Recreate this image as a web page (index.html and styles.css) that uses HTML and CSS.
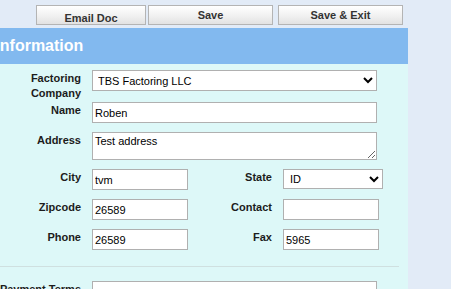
FILE: index.html
```html
<!DOCTYPE html>
<html lang="en">
<head>
    <meta charset="UTF-8">
    <meta name="viewport" content="width=device-width, initial-scale=1.0">
    <title>Factoring Company</title>
    <link rel="stylesheet" href="styles.css">
</head>
<body>
    <div class="toolbar">
        <button class="btn btn-email">Email Doc</button>
        <button class="btn btn-save">Save</button>
        <button class="btn btn-exit">Save &amp; Exit</button>
    </div>

    <div class="panel">
        <div class="panel-header">Company Information</div>
        <div class="panel-body">
            <div class="row">
                <div class="field">
                    <label class="label label-tall">Factoring Company</label>
                    <select class="input select-wide">
                        <option>TBS Factoring LLC</option>
                    </select>
                </div>
            </div>
            <div class="row">
                <div class="field">
                    <label class="label">Name</label>
                    <input class="input input-wide" type="text" value="Roben">
                </div>
            </div>
            <div class="row">
                <div class="field">
                    <label class="label">Address</label>
                    <textarea class="input textarea">Test address</textarea>
                </div>
            </div>
            <div class="row">
                <div class="field">
                    <label class="label">City</label>
                    <input class="input input-short" type="text" value="tvm">
                </div>
                <div class="field">
                    <label class="label">State</label>
                    <select class="input select-state">
                        <option>ID</option>
                    </select>
                </div>
            </div>
            <div class="row">
                <div class="field">
                    <label class="label">Zipcode</label>
                    <input class="input input-short" type="text" value="26589">
                </div>
                <div class="field">
                    <label class="label">Contact</label>
                    <input class="input input-short" type="text" value="">
                </div>
            </div>
            <div class="row">
                <div class="field">
                    <label class="label">Phone</label>
                    <input class="input input-short" type="text" value="26589">
                </div>
                <div class="field">
                    <label class="label">Fax</label>
                    <input class="input input-short" type="text" value="5965">
                </div>
            </div>

            <div class="divider"></div>

            <div class="row">
                <div class="field">
                    <label class="label">Payment Terms</label>
                    <input class="input input-wide" type="text" value="">
                </div>
            </div>
        </div>
    </div>
</body>
</html>
```

FILE: styles.css
```css
* {
    box-sizing: border-box;
}

body {
    margin: 0;
    background: #e2ebf7;
    font-family: 'Liberation Sans', Arial, sans-serif;
    height: 289px;
    overflow: hidden;
}

/* Top buttons */
.toolbar {
    display: flex;
    height: 28px;
    padding: 5px 0 0 36px;
}

.btn {
    height: 20px;
    padding: 0;
    border: 1px solid #b4b4b4;
    border-radius: 0;
    background: linear-gradient(#ffffff, #f2f2f2 50%, #e2e2e2);
    font-family: 'Liberation Sans', Arial, sans-serif;
    font-size: 11px;
    font-weight: bold;
    color: #333;
    line-height: 16px;
}

.btn-email {
    width: 110px;
    padding-top: 4px;
}

.btn-save {
    width: 125px;
    margin-left: 2px;
}

.btn-exit {
    width: 125px;
    margin-left: 5px;
}

/* Panel */
.panel {
    margin-left: -90px;
    width: 498px;
}

.panel-header {
    height: 36px;
    line-height: 36px;
    padding-left: 8px;
    background: #82b9ef;
    color: #fff;
    font-size: 16px;
    font-weight: bold;
    white-space: nowrap;
}

.panel-body {
    background: #ddf8f8;
    padding: 6px 9px 20px 87px;
}

.row {
    display: flex;
    margin-bottom: 9px;
}

.field {
    display: flex;
    align-items: flex-start;
}

.label {
    width: 84px;
    margin-right: 11px;
    padding-top: 1px;
    text-align: right;
    font-size: 11px;
    font-weight: bold;
    line-height: 15px;
    color: #1c1c1c;
}

.label-tall {
    margin-bottom: -8px;
}

.input {
    height: 21px;
    padding: 0 2px;
    border: 1px solid #b0b0b0;
    border-radius: 0;
    background: #fff;
    font-family: 'Liberation Sans', Arial, sans-serif;
    font-size: 11px;
    color: #000;
}

.input-wide {
    width: 285px;
}

.input-short {
    width: 96px;
}

.select-wide {
    width: 285px;
    padding-left: 1px;
}

.select-state {
    width: 100px;
    height: 20px;
}

.textarea {
    width: 285px;
    height: 28px;
    padding: 2px;
    resize: vertical;
}

.divider {
    height: 1px;
    margin: 16px 0 14px -87px;
    background: #cfe0e0;
}
```
